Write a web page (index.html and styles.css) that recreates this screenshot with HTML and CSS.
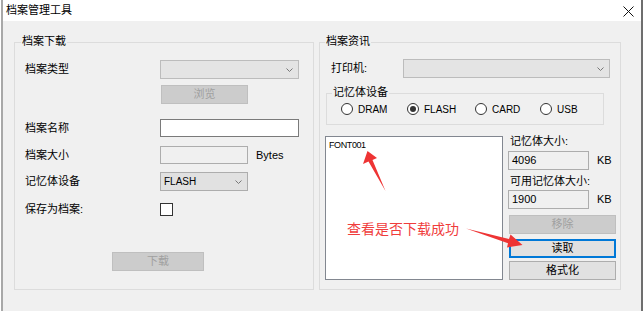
FILE: index.html
```html
<!DOCTYPE html>
<html lang="zh">
<head>
  <meta charset="UTF-8">
  <title>档案管理工具</title>
  <link rel="stylesheet" href="styles.css">
</head>
<body>
<div class="window">
  <div class="titlebar">
    <span class="title">档案管理工具</span>
    <svg class="close" width="11" height="11" viewBox="0 0 11 11">
      <path d="M0.5 0.5 L10.5 10.5 M10.5 0.5 L0.5 10.5" stroke="#111" stroke-width="1" fill="none"/>
    </svg>
  </div>

  <div class="client">
    <!-- 档案下载 -->
    <div class="group group-left">
      <span class="legend">档案下载</span>

      <div class="row row-type">
        <span class="label">档案类型</span>
        <div class="combo off w-wide">
          <span></span>
          <svg width="7" height="4" viewBox="0 0 7 4"><polyline points="0.5,0.5 3.5,3.5 6.5,0.5" fill="none" stroke="#777"/></svg>
        </div>
      </div>

      <div class="row row-browse">
        <div class="btn off w-browse">浏览</div>
      </div>

      <div class="row row-name">
        <span class="label">档案名称</span>
        <div class="field w-wide"></div>
      </div>

      <div class="row row-size">
        <span class="label">档案大小</span>
        <div class="field ro w-mid"></div>
        <span class="unit">Bytes</span>
      </div>

      <div class="row row-device">
        <span class="label">记忆体设备</span>
        <div class="combo w-mid">
          <span class="latin">FLASH</span>
          <svg width="7" height="4" viewBox="0 0 7 4"><polyline points="0.5,0.5 3.5,3.5 6.5,0.5" fill="none" stroke="#777"/></svg>
        </div>
      </div>

      <div class="row row-save">
        <span class="label">保存为档案:</span>
        <span class="check"></span>
      </div>

      <div class="row row-download">
        <div class="btn off w-download">下载</div>
      </div>
    </div>

    <!-- 档案资讯 -->
    <div class="group group-right">
      <span class="legend">档案资讯</span>

      <div class="row row-printer">
        <span class="label label-printer">打印机:</span>
        <div class="combo off w-printer">
          <span></span>
          <svg width="7" height="4" viewBox="0 0 7 4"><polyline points="0.5,0.5 3.5,3.5 6.5,0.5" fill="none" stroke="#777"/></svg>
        </div>
      </div>

      <div class="memgroup">
        <span class="legend">记忆体设备</span>
        <div class="radios">
          <label class="radio r-dram"><span class="dot"></span><span class="latin">DRAM</span></label>
          <label class="radio r-flash"><span class="dot on"></span><span class="latin">FLASH</span></label>
          <label class="radio r-card"><span class="dot"></span><span class="latin">CARD</span></label>
          <label class="radio r-usb"><span class="dot"></span><span class="latin">USB</span></label>
        </div>
      </div>

      <div class="lower">
        <div class="listbox">
          <div class="item">FONT001</div>
        </div>
        <div class="side">
          <div class="side-label first">记忆体大小:</div>
          <div class="kb-row">
            <div class="field ro w-kb">4096</div>
            <span class="unit">KB</span>
          </div>
          <div class="side-label">可用记忆体大小:</div>
          <div class="kb-row second">
            <div class="field ro w-kb">1900</div>
            <span class="unit">KB</span>
          </div>
          <div class="btn off w-side btn-remove">移除</div>
          <div class="btn focus w-side btn-read">读取</div>
          <div class="btn w-side btn-format">格式化</div>
        </div>
      </div>
    </div>
  </div>
</div>

<div class="note">查看是否下载成功</div>
<svg class="arrows" width="644" height="314" viewBox="0 0 644 314">
  <polygon points="367.5,151 377,158 372.5,160 385.5,191 368.5,161.5 363,164" fill="#ee3434"/>
  <polygon points="466,228.5 509,239 510.5,234.5 522.5,245 507,247.5 508,243.2" fill="#ee3434"/>
</svg>
</body>
</html>
```

FILE: styles.css
```css
body {
  margin: 0;
  background-color: #FFFFFF;
  color: #000000;
  font-family: "Liberation Sans", "Noto Sans CJK SC", sans-serif;
  font-size: 11px;
  line-height: 13px;
  position: relative;
  height: 314px;
  overflow: hidden;
}
.window {
  margin-left: 1px;
  width: 638px;
  border-left: 2px solid #a8a8a8;
  border-right: 2px solid #6e6e6e;
}
.titlebar {
  height: 21px;
  background-color: #FFFFFF;
  display: flex;
  align-items: center;
  justify-content: space-between;
  padding: 0 7px 0 3px;
}
.title {
  font-size: 11px;
}
.close {
  display: block;
  margin-top: 1px;
}
.client {
  box-sizing: border-box;
  height: 290px;
  background-color: #F0F0F0;
  display: flex;
  align-items: flex-start;
  gap: 5px;
  padding: 21px 0 0 11px;
}
.group {
  box-sizing: border-box;
  position: relative;
  height: 248px;
  border: 1px solid #DCDCDC;
}
.group-left {
  width: 300px;
  padding-left: 10px;
}
.group-right {
  width: 302px;
}
.legend {
  position: absolute;
  top: -8px;
  left: 6px;
  padding: 0 1px;
  background-color: #F0F0F0;
  line-height: 13px;
}
.group-right > .legend {
  left: 5px;
}
.row {
  display: flex;
  align-items: center;
}
.label {
  width: 135px;
  flex: none;
}
.latin {
  font-size: 10px;
}
.unit {
  margin-left: 8px;
}

/* controls */
.combo {
  box-sizing: border-box;
  height: 19px;
  border: 1px solid #ADADAD;
  background-color: #E1E1E1;
  display: flex;
  align-items: center;
  justify-content: space-between;
  padding: 0 5px 0 3px;
}
.combo svg {
  display: block;
}
.combo.off {
  background-color: #E4E4E4;
  border-color: #BCBCBC;
}
.field {
  box-sizing: border-box;
  height: 18px;
  border: 1px solid #7A7A7A;
  background-color: #FFFFFF;
  display: flex;
  align-items: center;
  padding-left: 3px;
}
.field.ro {
  background-color: #F0F0F0;
  border-color: #ADADAD;
}
.btn {
  box-sizing: border-box;
  height: 19px;
  border: 1px solid #ADADAD;
  background-color: #E1E1E1;
  display: flex;
  align-items: center;
  justify-content: center;
}
.btn.off {
  background-color: #CCCCCC;
  border-color: #BFBFBF;
  color: #A0A0A0;
}
.btn.focus {
  border: 2px solid #0078D7;
}
.check {
  box-sizing: border-box;
  width: 13px;
  height: 13px;
  border: 1px solid #333333;
  background-color: #FFFFFF;
}

.w-wide { width: 139px; }
.w-mid { width: 88px; }
.w-browse { width: 87px; margin-left: 136px; }
.w-download { width: 92px; }
.w-printer { width: 207px; height: 19px; }
.w-kb { width: 81px; height: 19px; }
.w-side { width: 107px; margin-left: 1px; }

/* left rows */
.row-type { margin-top: 17px; }
.row-browse { margin-top: 6px; }
.row-name { margin-top: 15px; }
.row-size { margin-top: 9px; }
.row-device { margin-top: 8px; }
.row-save { margin-top: 12px; }
.row-download { margin-top: 36px; margin-left: 87px; }

/* right group */
.row-printer {
  margin: 16px 0 0 11px;
}
.label-printer {
  width: 72px;
}
.memgroup {
  box-sizing: border-box;
  position: relative;
  width: 278px;
  height: 32px;
  margin: 15px 0 0 6px;
  border: 1px solid #DCDCDC;
  padding: 9px 0 0 14px;
}
.memgroup .legend {
  left: 5px;
}
.radios {
  display: flex;
}
.radio {
  display: flex;
  align-items: center;
  gap: 5px;
  height: 12px;
}
.r-dram { width: 66px; }
.r-flash { width: 68px; }
.r-card { width: 65px; }
.dot {
  box-sizing: border-box;
  width: 12px;
  height: 12px;
  border: 1px solid #333333;
  border-radius: 50%;
  background-color: #FFFFFF;
  display: flex;
  align-items: center;
  justify-content: center;
}
.dot.on::after {
  content: "";
  width: 6px;
  height: 6px;
  border-radius: 50%;
  background-color: #333333;
}
.lower {
  display: flex;
  align-items: flex-start;
  margin: 11px 0 0 5px;
}
.listbox {
  box-sizing: border-box;
  width: 178px;
  height: 144px;
  border: 1px solid #828790;
  background-color: #FFFFFF;
  padding: 3px 3px;
}
.item {
  font-size: 9px;
  line-height: 11px;
  letter-spacing: -0.4px;
}
.side {
  margin-left: 5px;
  display: flex;
  flex-direction: column;
}
.side-label {
  line-height: 12px;
  margin-top: 5px;
  padding-left: 2px;
}
.side-label.first {
  margin-top: -1px;
}
.kb-row {
  display: flex;
  align-items: center;
  margin-top: 4px;
}
.kb-row.second {
  margin-top: 3px;
}
.btn-remove { margin-top: 6px; }
.btn-read { margin-top: 5px; }
.btn-format { margin-top: 3px; }

/* annotation drawn over the screenshot */
.note {
  position: absolute;
  left: 347px;
  top: 222px;
  font-size: 14px;
  line-height: 14px;
  color: #F03C3C;
}
.arrows {
  position: absolute;
  left: 0;
  top: 0;
  pointer-events: none;
}
```
